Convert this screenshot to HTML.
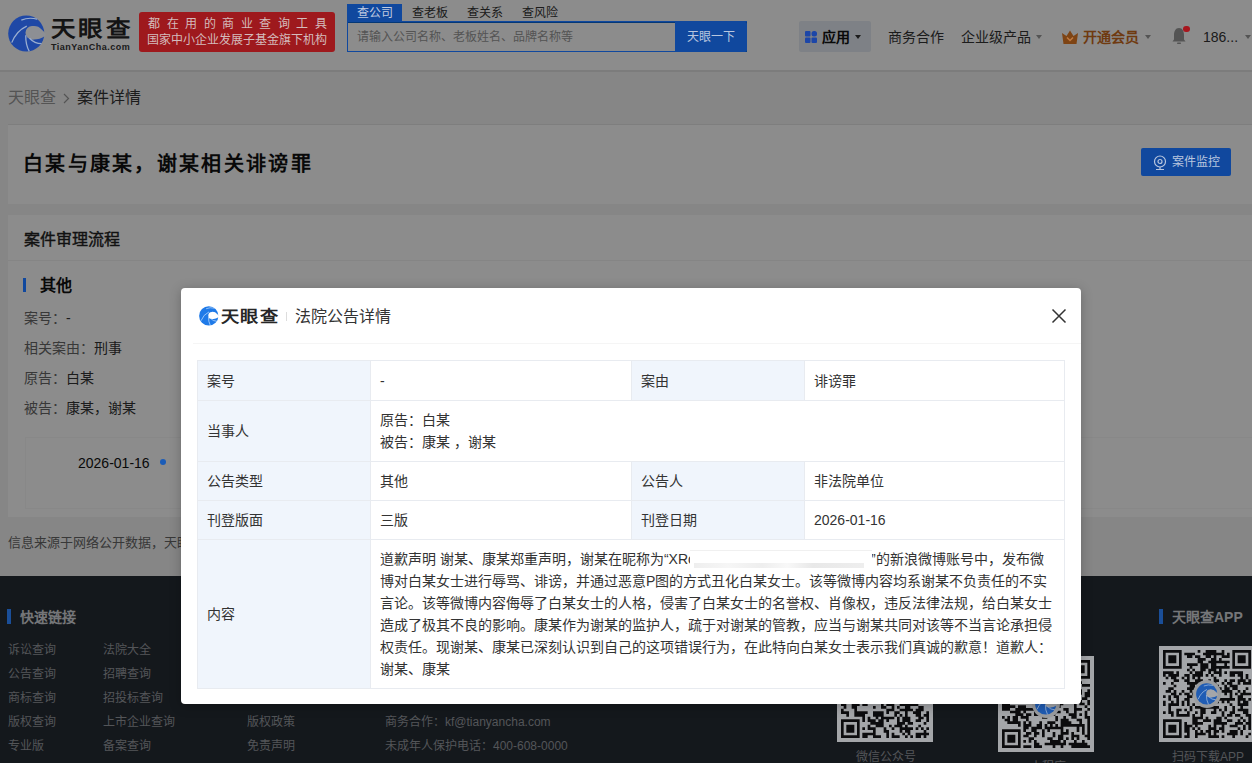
<!DOCTYPE html>
<html lang="zh-CN"><head><meta charset="utf-8">
<style>
*{margin:0;padding:0;box-sizing:border-box;}
html,body{width:1252px;height:763px;overflow:hidden;}
body{font-family:"Liberation Sans",sans-serif;background:#f5f5f5;color:#333;position:relative;font-size:14px;}
.a{position:absolute;white-space:nowrap;line-height:1;}
.z{z-index:5;}
#hdr{position:absolute;left:0;top:0;width:1252px;height:72px;background:#fff;border-bottom:2px solid #e2e2e2;}
.card{position:absolute;background:#fff;}
#footer{position:absolute;left:0;top:576px;width:1252px;height:187px;background:#262c33;}
#overlay{position:absolute;left:0;top:0;width:1252px;height:763px;background:rgba(0,0,0,0.45);z-index:4;}
#modal{position:absolute;left:181px;top:288px;width:900px;height:416px;background:#fff;border-radius:4px;z-index:10;box-shadow:0 2px 12px rgba(0,0,0,0.25);}
table.t{position:absolute;left:16px;top:72px;width:868px;border-collapse:collapse;}
table.t td{border:1px solid #e8ebf0;font-size:14px;color:#333;padding:0 9px;vertical-align:middle;line-height:22px;}
table.t td.l{background:#f0f5fc;}
.caret{position:absolute;width:0;height:0;border-left:3px solid transparent;border-right:3px solid transparent;border-top:4px solid #999;}
.fl{position:absolute;font-size:12px;color:#979ba1;white-space:nowrap;line-height:1;}
.qr{position:absolute;width:96px;height:96px;}
.bar{position:absolute;width:4px;}
</style></head>
<body>
<div id="hdr">
  
  <div class="a" style="left:51px;top:18.5px;font-size:21.5px;font-weight:bold;color:#262626;letter-spacing:2px;transform:scaleX(1.14);transform-origin:0 0;">天眼查</div>
  <div class="a" style="left:51px;top:42.5px;font-size:9px;font-weight:bold;color:#333;letter-spacing:0.5px;">TianYanCha.com</div>
  <div class="a" style="left:347px;top:22px;width:400px;height:30px;border:1.5px solid #0a66d6;background:#fff;"></div>
  <div class="a" style="left:357px;top:31px;font-size:12px;color:#999;">请输入公司名称、老板姓名、品牌名称等</div>
  <div class="a" style="left:412px;top:7px;font-size:12px;color:#333;">查老板</div>
  <div class="a" style="left:467px;top:7px;font-size:12px;color:#333;">查关系</div>
  <div class="a" style="left:522px;top:7px;font-size:12px;color:#333;">查风险</div>
  <div class="a" style="left:799px;top:21px;width:72px;height:31px;background:#e6ecf4;border-radius:2px;"></div>
  <div class="a" style="left:822px;top:30px;font-size:14px;color:#111;font-weight:bold;">应用</div>
  <div class="caret" style="left:855px;top:35px;border-top-color:#333;"></div>
  <div class="a" style="left:888px;top:30px;font-size:14px;color:#333;">商务合作</div>
  <div class="a" style="left:961px;top:30px;font-size:14px;color:#333;">企业级产品</div>
  <div class="caret" style="left:1036px;top:35px;"></div>
  <div class="caret" style="left:1145px;top:35px;"></div>
  <svg class="a" style="left:1171px;top:27px;" width="16" height="18" viewBox="0 0 16 18"><path d="M8 1 C4.5 1 3 4.5 3 8 L3 12.5 L1.5 14.5 L14.5 14.5 L13 12.5 L13 8 C13 4.5 11.5 1 8 1z" fill="#999"/><rect x="6" y="15.5" width="4" height="1.5" rx="0.7" fill="#999"/></svg>
  <div class="a" style="left:1203px;top:30px;font-size:14px;color:#333;">186...</div>
  <div class="caret" style="left:1245px;top:35px;"></div>
</div>
<!-- saturated header items above overlay -->
<div class="a z" style="left:8px;top:14.5px;"><svg width="37.5" height="37.5" viewBox="0 0 38 38">
<circle cx="18.5" cy="18.8" r="18.3" fill="#1f48a6"/>
<circle cx="24.5" cy="18" r="6.8" fill="#8d8f94"/>
<path d="M24 11.2 Q31 10.5 33.8 14.5 L38 18.5 L38 21 Q31 25.5 24.5 24.8z" fill="#8d8f94"/>
<path d="M3.8 28 Q8.5 16 19 11.2" stroke="#9aaed0" stroke-width="1.3" fill="none"/>
<path d="M13.5 5.2 Q21 2 29.5 4.2" stroke="#9aaed0" stroke-width="1.2" fill="none"/>
<path d="M18 20.5 Q17.8 30 21.5 36.8" stroke="#9aaed0" stroke-width="1.3" fill="none"/>
<path d="M21.8 23.5 Q27 29 34 29" stroke="#9aaed0" stroke-width="1.3" fill="none"/>
</svg></div>
<div class="a z" style="left:139px;top:12px;width:196px;height:40px;background:#9e191d;border-radius:3px;"></div>
<div class="a z" style="left:148px;top:18px;width:179px;font-size:12px;color:#d4bcbc;display:flex;justify-content:space-between;"><span>都</span><span>在</span><span>用</span><span>的</span><span>商</span><span>业</span><span>查</span><span>询</span><span>工</span><span>具</span></div>
<div class="a z" style="left:147px;top:34px;font-size:12px;color:#d4bcbc;">国家中小企业发展子基金旗下机构</div>
<div class="a z" style="left:347px;top:4px;width:55px;height:18px;background:#10489e;"></div>
<div class="a z" style="left:357px;top:7px;font-size:12px;color:#c0cbe0;">查公司</div>
<div class="a z" style="left:347px;top:21px;width:400px;height:1px;background:#10489e;"></div>
<div class="a z" style="left:347px;top:22px;width:1px;height:30px;background:#10489e;"></div>
<div class="a z" style="left:347px;top:51px;width:330px;height:1px;background:#10489e;"></div>
<div class="a z" style="left:675px;top:22px;width:72px;height:30px;background:#10489e;border-radius:0 2px 2px 0;"></div>
<div class="a z" style="left:687px;top:31px;font-size:12px;color:#b8c6de;">天眼一下</div>
<svg class="a z" style="left:805px;top:31px;" width="12" height="12" viewBox="0 0 12 12"><rect x="0" y="0" width="5.5" height="5.5" rx="1" fill="#1c46a8"/><rect x="6.5" y="0" width="5.5" height="5.5" rx="2.5" fill="#1c46a8"/><rect x="0" y="6.5" width="5.5" height="5.5" rx="1" fill="#1c46a8"/><rect x="6.5" y="6.5" width="5.5" height="5.5" rx="1" fill="#1c46a8"/></svg>
<svg class="a z" style="left:1062px;top:30px;" width="16" height="14" viewBox="0 0 16 14"><path d="M0 3 L4.5 6 L8 0.5 L11.5 6 L16 3 L14.5 14 L1.5 14z" fill="#7e4414"/><path d="M5 7.5 L8 10.5 L11 7.5" stroke="#c07a40" stroke-width="1.5" fill="none"/></svg>
<div class="a z" style="left:1083px;top:30px;font-size:14px;color:#6f3a10;font-weight:bold;">开通会员</div>
<div class="a z" style="left:1183px;top:25.5px;width:6.5px;height:6.5px;background:#a8161e;border-radius:50%;"></div>

<div class="a" style="left:8px;top:90px;font-size:16px;color:#999;">天眼查</div>
<svg class="a" style="left:63px;top:93px;" width="7" height="11" viewBox="0 0 7 11"><path d="M1 1 L5.5 5.5 L1 10" stroke="#999" stroke-width="1.2" fill="none"/></svg>
<div class="a" style="left:77px;top:90px;font-size:16px;color:#333;">案件详情</div>

<div class="card" style="left:8px;top:124px;width:1252px;height:80px;border-top:1px solid #e6e6e6;">
  <div class="a" style="left:15px;top:29px;font-size:20px;font-weight:bold;color:#111;letter-spacing:2.3px;">白某与康某，谢某相关诽谤罪</div>
</div>
<div class="a z" style="left:1141px;top:148px;width:90px;height:28px;background:#10489e;border-radius:2px;"></div>
<svg class="a z" style="left:1153px;top:155px;" width="14" height="16" viewBox="0 0 14 16"><circle cx="7" cy="6.5" r="5.5" stroke="#b8c6de" stroke-width="1.2" fill="none"/><circle cx="7" cy="6.5" r="2" stroke="#b8c6de" stroke-width="1.2" fill="none"/><path d="M3 14.5 L11 14.5 M7 12 L7 14.5" stroke="#b8c6de" stroke-width="1.2"/></svg>
<div class="a z" style="left:1172px;top:156px;font-size:12px;color:#b8c6de;">案件监控</div>

<div class="card" style="left:8px;top:215px;width:1252px;height:302px;">
  <div class="a" style="left:16px;top:17px;font-size:16px;color:#222;-webkit-text-stroke:0.4px #222;">案件审理流程</div>
  <div class="a" style="left:0;top:45px;width:1252px;height:1px;background:#f2f2f2;"></div>
  <div class="a" style="left:32px;top:63px;font-size:16px;font-weight:bold;color:#111;">其他</div>
  <div class="a" style="left:16px;top:96px;font-size:14px;color:#666;">案号：<span style="color:#333">-</span></div>
  <div class="a" style="left:16px;top:126px;font-size:14px;color:#666;">相关案由：<span style="color:#333">刑事</span></div>
  <div class="a" style="left:16px;top:156px;font-size:14px;color:#666;">原告：<span style="color:#333">白某</span></div>
  <div class="a" style="left:16px;top:186px;font-size:14px;color:#666;">被告：<span style="color:#333">康某，谢某</span></div>
  <div class="a" style="left:17px;top:222px;width:1252px;height:72px;border:1px solid #f8f8f8;"></div>
  <div class="a" style="left:70px;top:241px;font-size:14px;color:#111;">2026-01-16</div>
</div>
<div class="a z" style="left:23px;top:278px;width:3px;height:14px;background:#10489e;"></div>
<div class="a z" style="left:160px;top:459px;width:6px;height:6px;background:#1a5cb8;border-radius:50%;"></div>

<div class="a" style="left:8px;top:536px;font-size:13px;color:#666;">信息来源于网络公开数据，天眼查</div>

<div id="footer">
  <div class="a" style="left:20px;top:34px;font-size:14px;font-weight:bold;color:#d5d8dc;">快速链接</div>
  <div class="fl" style="left:8px;top:68px;">诉讼查询</div>
  <div class="fl" style="left:8px;top:92px;">公告查询</div>
  <div class="fl" style="left:8px;top:116px;">商标查询</div>
  <div class="fl" style="left:8px;top:140px;">版权查询</div>
  <div class="fl" style="left:8px;top:164px;">专业版</div>
  <div class="fl" style="left:103px;top:68px;">法院大全</div>
  <div class="fl" style="left:103px;top:92px;">招聘查询</div>
  <div class="fl" style="left:103px;top:116px;">招投标查询</div>
  <div class="fl" style="left:103px;top:140px;">上市企业查询</div>
  <div class="fl" style="left:103px;top:164px;">备案查询</div>
  <div class="fl" style="left:247px;top:140px;">版权政策</div>
  <div class="fl" style="left:247px;top:164px;">免责声明</div>
  <div class="fl" style="left:385px;top:140px;">商务合作：kf@tianyancha.com</div>
  <div class="fl" style="left:385px;top:164px;">未成年人保护电话：400-608-0000</div>
  <div class="a" style="left:1172px;top:34px;font-size:14px;font-weight:bold;color:#d5d8dc;">天眼查APP</div>
  <div class="fl" style="left:856px;top:175px;">微信公众号</div>
  <div class="fl" style="left:1172px;top:175px;">扫码下载APP</div>
  <div class="fl" style="left:1030px;top:185px;">小程序</div>
</div>
<div class="a z" style="left:7px;top:609px;width:4px;height:15px;background:#1a4e98;"></div>
<div class="a z" style="left:1159px;top:609px;width:4px;height:15px;background:#1a4e98;"></div>
<div class="qr z" style="left:837px;top:646px;"><svg width="96" height="96" viewBox="0 0 96 96"><rect width="96" height="96" fill="#a4a6a9"/><g transform="translate(4,4)"><path d="M0.00 0.00h18.67v2.67h-18.67zM26.67 0.00h8.00v2.67h-8.00zM40.00 0.00h2.67v2.67h-2.67zM53.33 0.00h5.33v2.67h-5.33zM61.33 0.00h5.33v2.67h-5.33zM69.33 0.00h18.67v2.67h-18.67zM0.00 2.67h2.67v2.67h-2.67zM16.00 2.67h2.67v2.67h-2.67zM21.33 2.67h8.00v2.67h-8.00zM32.00 2.67h2.67v2.67h-2.67zM37.33 2.67h2.67v2.67h-2.67zM45.33 2.67h5.33v2.67h-5.33zM53.33 2.67h2.67v2.67h-2.67zM58.67 2.67h5.33v2.67h-5.33zM69.33 2.67h2.67v2.67h-2.67zM85.33 2.67h2.67v2.67h-2.67zM0.00 5.33h2.67v2.67h-2.67zM5.33 5.33h8.00v2.67h-8.00zM16.00 5.33h2.67v2.67h-2.67zM21.33 5.33h2.67v2.67h-2.67zM26.67 5.33h10.67v2.67h-10.67zM42.67 5.33h2.67v2.67h-2.67zM48.00 5.33h5.33v2.67h-5.33zM58.67 5.33h2.67v2.67h-2.67zM64.00 5.33h2.67v2.67h-2.67zM69.33 5.33h2.67v2.67h-2.67zM74.67 5.33h8.00v2.67h-8.00zM85.33 5.33h2.67v2.67h-2.67zM0.00 8.00h2.67v2.67h-2.67zM5.33 8.00h8.00v2.67h-8.00zM16.00 8.00h2.67v2.67h-2.67zM21.33 8.00h2.67v2.67h-2.67zM29.33 8.00h5.33v2.67h-5.33zM40.00 8.00h2.67v2.67h-2.67zM50.67 8.00h8.00v2.67h-8.00zM61.33 8.00h2.67v2.67h-2.67zM69.33 8.00h2.67v2.67h-2.67zM74.67 8.00h8.00v2.67h-8.00zM85.33 8.00h2.67v2.67h-2.67zM0.00 10.67h2.67v2.67h-2.67zM5.33 10.67h8.00v2.67h-8.00zM16.00 10.67h2.67v2.67h-2.67zM21.33 10.67h10.67v2.67h-10.67zM34.67 10.67h5.33v2.67h-5.33zM53.33 10.67h8.00v2.67h-8.00zM69.33 10.67h2.67v2.67h-2.67zM74.67 10.67h8.00v2.67h-8.00zM85.33 10.67h2.67v2.67h-2.67zM0.00 13.33h2.67v2.67h-2.67zM16.00 13.33h2.67v2.67h-2.67zM29.33 13.33h2.67v2.67h-2.67zM42.67 13.33h2.67v2.67h-2.67zM50.67 13.33h2.67v2.67h-2.67zM64.00 13.33h2.67v2.67h-2.67zM69.33 13.33h2.67v2.67h-2.67zM85.33 13.33h2.67v2.67h-2.67zM0.00 16.00h18.67v2.67h-18.67zM21.33 16.00h2.67v2.67h-2.67zM26.67 16.00h5.33v2.67h-5.33zM37.33 16.00h2.67v2.67h-2.67zM42.67 16.00h2.67v2.67h-2.67zM48.00 16.00h5.33v2.67h-5.33zM61.33 16.00h2.67v2.67h-2.67zM69.33 16.00h18.67v2.67h-18.67zM26.67 18.67h8.00v2.67h-8.00zM37.33 18.67h2.67v2.67h-2.67zM45.33 18.67h2.67v2.67h-2.67zM50.67 18.67h10.67v2.67h-10.67zM64.00 18.67h2.67v2.67h-2.67zM2.67 21.33h13.33v2.67h-13.33zM18.67 21.33h8.00v2.67h-8.00zM37.33 21.33h2.67v2.67h-2.67zM45.33 21.33h2.67v2.67h-2.67zM53.33 21.33h5.33v2.67h-5.33zM64.00 21.33h2.67v2.67h-2.67zM77.33 21.33h2.67v2.67h-2.67zM82.67 21.33h2.67v2.67h-2.67zM8.00 24.00h2.67v2.67h-2.67zM24.00 24.00h2.67v2.67h-2.67zM32.00 24.00h8.00v2.67h-8.00zM45.33 24.00h5.33v2.67h-5.33zM53.33 24.00h2.67v2.67h-2.67zM58.67 24.00h5.33v2.67h-5.33zM66.67 24.00h5.33v2.67h-5.33zM85.33 24.00h2.67v2.67h-2.67zM2.67 26.67h5.33v2.67h-5.33zM10.67 26.67h2.67v2.67h-2.67zM26.67 26.67h5.33v2.67h-5.33zM37.33 26.67h2.67v2.67h-2.67zM50.67 26.67h2.67v2.67h-2.67zM61.33 26.67h2.67v2.67h-2.67zM69.33 26.67h2.67v2.67h-2.67zM77.33 26.67h2.67v2.67h-2.67zM82.67 26.67h2.67v2.67h-2.67zM0.00 29.33h2.67v2.67h-2.67zM8.00 29.33h10.67v2.67h-10.67zM24.00 29.33h8.00v2.67h-8.00zM37.33 29.33h2.67v2.67h-2.67zM42.67 29.33h8.00v2.67h-8.00zM53.33 29.33h5.33v2.67h-5.33zM61.33 29.33h2.67v2.67h-2.67zM66.67 29.33h2.67v2.67h-2.67zM72.00 29.33h5.33v2.67h-5.33zM80.00 29.33h8.00v2.67h-8.00zM2.67 32.00h5.33v2.67h-5.33zM24.00 32.00h2.67v2.67h-2.67zM34.67 32.00h5.33v2.67h-5.33zM42.67 32.00h2.67v2.67h-2.67zM50.67 32.00h5.33v2.67h-5.33zM58.67 32.00h5.33v2.67h-5.33zM66.67 32.00h2.67v2.67h-2.67zM72.00 32.00h5.33v2.67h-5.33zM80.00 32.00h5.33v2.67h-5.33zM5.33 34.67h2.67v2.67h-2.67zM18.67 34.67h10.67v2.67h-10.67zM37.33 34.67h8.00v2.67h-8.00zM53.33 34.67h5.33v2.67h-5.33zM61.33 34.67h2.67v2.67h-2.67zM66.67 34.67h5.33v2.67h-5.33zM74.67 34.67h2.67v2.67h-2.67zM80.00 34.67h2.67v2.67h-2.67zM0.00 37.33h5.33v2.67h-5.33zM8.00 37.33h8.00v2.67h-8.00zM18.67 37.33h2.67v2.67h-2.67zM34.67 37.33h2.67v2.67h-2.67zM48.00 37.33h2.67v2.67h-2.67zM61.33 37.33h2.67v2.67h-2.67zM77.33 37.33h2.67v2.67h-2.67zM82.67 37.33h5.33v2.67h-5.33zM0.00 40.00h8.00v2.67h-8.00zM13.33 40.00h2.67v2.67h-2.67zM21.33 40.00h2.67v2.67h-2.67zM32.00 40.00h2.67v2.67h-2.67zM48.00 40.00h2.67v2.67h-2.67zM56.00 40.00h18.67v2.67h-18.67zM8.00 42.67h2.67v2.67h-2.67zM16.00 42.67h2.67v2.67h-2.67zM21.33 42.67h10.67v2.67h-10.67zM34.67 42.67h2.67v2.67h-2.67zM40.00 42.67h2.67v2.67h-2.67zM48.00 42.67h5.33v2.67h-5.33zM58.67 42.67h2.67v2.67h-2.67zM64.00 42.67h13.33v2.67h-13.33zM80.00 42.67h2.67v2.67h-2.67zM0.00 45.33h2.67v2.67h-2.67zM8.00 45.33h2.67v2.67h-2.67zM13.33 45.33h5.33v2.67h-5.33zM21.33 45.33h2.67v2.67h-2.67zM32.00 45.33h2.67v2.67h-2.67zM42.67 45.33h2.67v2.67h-2.67zM48.00 45.33h8.00v2.67h-8.00zM58.67 45.33h5.33v2.67h-5.33zM66.67 45.33h5.33v2.67h-5.33zM74.67 45.33h2.67v2.67h-2.67zM2.67 48.00h5.33v2.67h-5.33zM16.00 48.00h5.33v2.67h-5.33zM34.67 48.00h5.33v2.67h-5.33zM48.00 48.00h10.67v2.67h-10.67zM61.33 48.00h2.67v2.67h-2.67zM66.67 48.00h5.33v2.67h-5.33zM80.00 48.00h8.00v2.67h-8.00zM0.00 50.67h2.67v2.67h-2.67zM8.00 50.67h5.33v2.67h-5.33zM21.33 50.67h8.00v2.67h-8.00zM32.00 50.67h2.67v2.67h-2.67zM40.00 50.67h2.67v2.67h-2.67zM50.67 50.67h8.00v2.67h-8.00zM61.33 50.67h5.33v2.67h-5.33zM69.33 50.67h2.67v2.67h-2.67zM74.67 50.67h2.67v2.67h-2.67zM80.00 50.67h5.33v2.67h-5.33zM0.00 53.33h5.33v2.67h-5.33zM10.67 53.33h8.00v2.67h-8.00zM21.33 53.33h5.33v2.67h-5.33zM40.00 53.33h2.67v2.67h-2.67zM45.33 53.33h8.00v2.67h-8.00zM58.67 53.33h18.67v2.67h-18.67zM2.67 56.00h2.67v2.67h-2.67zM10.67 56.00h5.33v2.67h-5.33zM32.00 56.00h2.67v2.67h-2.67zM40.00 56.00h5.33v2.67h-5.33zM50.67 56.00h2.67v2.67h-2.67zM56.00 56.00h2.67v2.67h-2.67zM64.00 56.00h5.33v2.67h-5.33zM77.33 56.00h5.33v2.67h-5.33zM0.00 58.67h2.67v2.67h-2.67zM13.33 58.67h2.67v2.67h-2.67zM45.33 58.67h8.00v2.67h-8.00zM58.67 58.67h13.33v2.67h-13.33zM74.67 58.67h8.00v2.67h-8.00zM0.00 61.33h8.00v2.67h-8.00zM13.33 61.33h13.33v2.67h-13.33zM32.00 61.33h10.67v2.67h-10.67zM45.33 61.33h2.67v2.67h-2.67zM53.33 61.33h5.33v2.67h-5.33zM64.00 61.33h2.67v2.67h-2.67zM72.00 61.33h8.00v2.67h-8.00zM85.33 61.33h2.67v2.67h-2.67zM5.33 64.00h2.67v2.67h-2.67zM13.33 64.00h10.67v2.67h-10.67zM32.00 64.00h10.67v2.67h-10.67zM53.33 64.00h2.67v2.67h-2.67zM58.67 64.00h2.67v2.67h-2.67zM64.00 64.00h2.67v2.67h-2.67zM74.67 64.00h5.33v2.67h-5.33zM82.67 64.00h5.33v2.67h-5.33zM21.33 66.67h2.67v2.67h-2.67zM26.67 66.67h2.67v2.67h-2.67zM34.67 66.67h2.67v2.67h-2.67zM40.00 66.67h13.33v2.67h-13.33zM56.00 66.67h2.67v2.67h-2.67zM61.33 66.67h8.00v2.67h-8.00zM77.33 66.67h5.33v2.67h-5.33zM85.33 66.67h2.67v2.67h-2.67zM0.00 69.33h18.67v2.67h-18.67zM21.33 69.33h2.67v2.67h-2.67zM26.67 69.33h8.00v2.67h-8.00zM37.33 69.33h5.33v2.67h-5.33zM45.33 69.33h2.67v2.67h-2.67zM56.00 69.33h2.67v2.67h-2.67zM61.33 69.33h8.00v2.67h-8.00zM74.67 69.33h5.33v2.67h-5.33zM85.33 69.33h2.67v2.67h-2.67zM0.00 72.00h2.67v2.67h-2.67zM16.00 72.00h2.67v2.67h-2.67zM29.33 72.00h13.33v2.67h-13.33zM56.00 72.00h8.00v2.67h-8.00zM66.67 72.00h5.33v2.67h-5.33zM82.67 72.00h2.67v2.67h-2.67zM0.00 74.67h2.67v2.67h-2.67zM5.33 74.67h8.00v2.67h-8.00zM16.00 74.67h2.67v2.67h-2.67zM26.67 74.67h2.67v2.67h-2.67zM34.67 74.67h8.00v2.67h-8.00zM48.00 74.67h2.67v2.67h-2.67zM53.33 74.67h8.00v2.67h-8.00zM64.00 74.67h2.67v2.67h-2.67zM77.33 74.67h2.67v2.67h-2.67zM0.00 77.33h2.67v2.67h-2.67zM5.33 77.33h8.00v2.67h-8.00zM16.00 77.33h2.67v2.67h-2.67zM21.33 77.33h2.67v2.67h-2.67zM26.67 77.33h8.00v2.67h-8.00zM42.67 77.33h2.67v2.67h-2.67zM50.67 77.33h2.67v2.67h-2.67zM58.67 77.33h13.33v2.67h-13.33zM74.67 77.33h2.67v2.67h-2.67zM80.00 77.33h2.67v2.67h-2.67zM85.33 77.33h2.67v2.67h-2.67zM0.00 80.00h2.67v2.67h-2.67zM5.33 80.00h8.00v2.67h-8.00zM16.00 80.00h2.67v2.67h-2.67zM32.00 80.00h2.67v2.67h-2.67zM42.67 80.00h5.33v2.67h-5.33zM58.67 80.00h2.67v2.67h-2.67zM64.00 80.00h5.33v2.67h-5.33zM82.67 80.00h2.67v2.67h-2.67zM0.00 82.67h2.67v2.67h-2.67zM16.00 82.67h2.67v2.67h-2.67zM21.33 82.67h13.33v2.67h-13.33zM45.33 82.67h2.67v2.67h-2.67zM50.67 82.67h2.67v2.67h-2.67zM61.33 82.67h2.67v2.67h-2.67zM66.67 82.67h2.67v2.67h-2.67zM74.67 82.67h13.33v2.67h-13.33zM0.00 85.33h18.67v2.67h-18.67zM21.33 85.33h5.33v2.67h-5.33zM32.00 85.33h8.00v2.67h-8.00zM45.33 85.33h2.67v2.67h-2.67zM50.67 85.33h8.00v2.67h-8.00zM64.00 85.33h2.67v2.67h-2.67zM69.33 85.33h2.67v2.67h-2.67zM74.67 85.33h5.33v2.67h-5.33zM82.67 85.33h2.67v2.67h-2.67z" fill="#0c0c0e"/></g></svg></div>
<div class="qr z" style="left:998px;top:656px;"><svg width="96" height="96" viewBox="0 0 96 96"><rect width="96" height="96" fill="#a4a6a9"/><g transform="translate(4,4)"><path d="M0.00 0.00h18.67v2.67h-18.67zM24.00 0.00h2.67v2.67h-2.67zM29.33 0.00h2.67v2.67h-2.67zM45.33 0.00h2.67v2.67h-2.67zM53.33 0.00h5.33v2.67h-5.33zM69.33 0.00h18.67v2.67h-18.67zM0.00 2.67h2.67v2.67h-2.67zM16.00 2.67h2.67v2.67h-2.67zM24.00 2.67h2.67v2.67h-2.67zM34.67 2.67h2.67v2.67h-2.67zM42.67 2.67h5.33v2.67h-5.33zM50.67 2.67h2.67v2.67h-2.67zM58.67 2.67h2.67v2.67h-2.67zM69.33 2.67h2.67v2.67h-2.67zM85.33 2.67h2.67v2.67h-2.67zM0.00 5.33h2.67v2.67h-2.67zM5.33 5.33h8.00v2.67h-8.00zM16.00 5.33h2.67v2.67h-2.67zM21.33 5.33h5.33v2.67h-5.33zM34.67 5.33h2.67v2.67h-2.67zM40.00 5.33h5.33v2.67h-5.33zM50.67 5.33h2.67v2.67h-2.67zM56.00 5.33h2.67v2.67h-2.67zM69.33 5.33h2.67v2.67h-2.67zM74.67 5.33h8.00v2.67h-8.00zM85.33 5.33h2.67v2.67h-2.67zM0.00 8.00h2.67v2.67h-2.67zM5.33 8.00h8.00v2.67h-8.00zM16.00 8.00h2.67v2.67h-2.67zM21.33 8.00h5.33v2.67h-5.33zM29.33 8.00h10.67v2.67h-10.67zM42.67 8.00h16.00v2.67h-16.00zM69.33 8.00h2.67v2.67h-2.67zM74.67 8.00h8.00v2.67h-8.00zM85.33 8.00h2.67v2.67h-2.67zM0.00 10.67h2.67v2.67h-2.67zM5.33 10.67h8.00v2.67h-8.00zM16.00 10.67h2.67v2.67h-2.67zM26.67 10.67h5.33v2.67h-5.33zM34.67 10.67h8.00v2.67h-8.00zM45.33 10.67h2.67v2.67h-2.67zM56.00 10.67h2.67v2.67h-2.67zM61.33 10.67h5.33v2.67h-5.33zM69.33 10.67h2.67v2.67h-2.67zM74.67 10.67h8.00v2.67h-8.00zM85.33 10.67h2.67v2.67h-2.67zM0.00 13.33h2.67v2.67h-2.67zM16.00 13.33h2.67v2.67h-2.67zM32.00 13.33h5.33v2.67h-5.33zM42.67 13.33h2.67v2.67h-2.67zM48.00 13.33h13.33v2.67h-13.33zM69.33 13.33h2.67v2.67h-2.67zM85.33 13.33h2.67v2.67h-2.67zM0.00 16.00h18.67v2.67h-18.67zM24.00 16.00h2.67v2.67h-2.67zM32.00 16.00h2.67v2.67h-2.67zM50.67 16.00h10.67v2.67h-10.67zM64.00 16.00h2.67v2.67h-2.67zM69.33 16.00h18.67v2.67h-18.67zM26.67 18.67h16.00v2.67h-16.00zM48.00 18.67h5.33v2.67h-5.33zM58.67 18.67h8.00v2.67h-8.00zM0.00 21.33h16.00v2.67h-16.00zM18.67 21.33h5.33v2.67h-5.33zM29.33 21.33h2.67v2.67h-2.67zM37.33 21.33h5.33v2.67h-5.33zM48.00 21.33h5.33v2.67h-5.33zM56.00 21.33h5.33v2.67h-5.33zM69.33 21.33h2.67v2.67h-2.67zM77.33 21.33h2.67v2.67h-2.67zM2.67 24.00h2.67v2.67h-2.67zM8.00 24.00h2.67v2.67h-2.67zM13.33 24.00h2.67v2.67h-2.67zM21.33 24.00h8.00v2.67h-8.00zM32.00 24.00h2.67v2.67h-2.67zM37.33 24.00h2.67v2.67h-2.67zM42.67 24.00h2.67v2.67h-2.67zM50.67 24.00h8.00v2.67h-8.00zM61.33 24.00h8.00v2.67h-8.00zM72.00 24.00h2.67v2.67h-2.67zM80.00 24.00h8.00v2.67h-8.00zM0.00 26.67h8.00v2.67h-8.00zM10.67 26.67h8.00v2.67h-8.00zM24.00 26.67h5.33v2.67h-5.33zM32.00 26.67h8.00v2.67h-8.00zM50.67 26.67h5.33v2.67h-5.33zM58.67 26.67h2.67v2.67h-2.67zM64.00 26.67h8.00v2.67h-8.00zM74.67 26.67h2.67v2.67h-2.67zM5.33 29.33h2.67v2.67h-2.67zM13.33 29.33h8.00v2.67h-8.00zM26.67 29.33h5.33v2.67h-5.33zM37.33 29.33h5.33v2.67h-5.33zM45.33 29.33h2.67v2.67h-2.67zM50.67 29.33h2.67v2.67h-2.67zM56.00 29.33h13.33v2.67h-13.33zM77.33 29.33h2.67v2.67h-2.67zM85.33 29.33h2.67v2.67h-2.67zM0.00 32.00h16.00v2.67h-16.00zM18.67 32.00h2.67v2.67h-2.67zM26.67 32.00h2.67v2.67h-2.67zM40.00 32.00h10.67v2.67h-10.67zM56.00 32.00h18.67v2.67h-18.67zM77.33 32.00h2.67v2.67h-2.67zM82.67 32.00h5.33v2.67h-5.33zM2.67 34.67h13.33v2.67h-13.33zM18.67 34.67h2.67v2.67h-2.67zM24.00 34.67h10.67v2.67h-10.67zM37.33 34.67h10.67v2.67h-10.67zM53.33 34.67h8.00v2.67h-8.00zM64.00 34.67h5.33v2.67h-5.33zM72.00 34.67h2.67v2.67h-2.67zM82.67 34.67h5.33v2.67h-5.33zM2.67 37.33h2.67v2.67h-2.67zM8.00 37.33h13.33v2.67h-13.33zM24.00 37.33h2.67v2.67h-2.67zM32.00 37.33h5.33v2.67h-5.33zM50.67 37.33h5.33v2.67h-5.33zM58.67 37.33h8.00v2.67h-8.00zM69.33 37.33h8.00v2.67h-8.00zM80.00 37.33h5.33v2.67h-5.33zM0.00 40.00h5.33v2.67h-5.33zM13.33 40.00h13.33v2.67h-13.33zM32.00 40.00h5.33v2.67h-5.33zM45.33 40.00h2.67v2.67h-2.67zM56.00 40.00h2.67v2.67h-2.67zM64.00 40.00h10.67v2.67h-10.67zM77.33 40.00h2.67v2.67h-2.67zM85.33 40.00h2.67v2.67h-2.67zM0.00 42.67h8.00v2.67h-8.00zM32.00 42.67h5.33v2.67h-5.33zM40.00 42.67h2.67v2.67h-2.67zM56.00 42.67h5.33v2.67h-5.33zM72.00 42.67h2.67v2.67h-2.67zM77.33 42.67h5.33v2.67h-5.33zM85.33 42.67h2.67v2.67h-2.67zM0.00 45.33h13.33v2.67h-13.33zM16.00 45.33h8.00v2.67h-8.00zM34.67 45.33h2.67v2.67h-2.67zM40.00 45.33h5.33v2.67h-5.33zM50.67 45.33h2.67v2.67h-2.67zM56.00 45.33h2.67v2.67h-2.67zM72.00 45.33h2.67v2.67h-2.67zM82.67 45.33h2.67v2.67h-2.67zM0.00 48.00h8.00v2.67h-8.00zM13.33 48.00h21.33v2.67h-21.33zM48.00 48.00h5.33v2.67h-5.33zM61.33 48.00h5.33v2.67h-5.33zM72.00 48.00h8.00v2.67h-8.00zM85.33 48.00h2.67v2.67h-2.67zM8.00 50.67h10.67v2.67h-10.67zM21.33 50.67h2.67v2.67h-2.67zM32.00 50.67h2.67v2.67h-2.67zM40.00 50.67h5.33v2.67h-5.33zM50.67 50.67h8.00v2.67h-8.00zM64.00 50.67h2.67v2.67h-2.67zM72.00 50.67h2.67v2.67h-2.67zM82.67 50.67h2.67v2.67h-2.67zM13.33 53.33h8.00v2.67h-8.00zM24.00 53.33h5.33v2.67h-5.33zM32.00 53.33h5.33v2.67h-5.33zM40.00 53.33h5.33v2.67h-5.33zM48.00 53.33h5.33v2.67h-5.33zM66.67 53.33h8.00v2.67h-8.00zM77.33 53.33h2.67v2.67h-2.67zM82.67 53.33h2.67v2.67h-2.67zM0.00 56.00h2.67v2.67h-2.67zM5.33 56.00h2.67v2.67h-2.67zM10.67 56.00h5.33v2.67h-5.33zM18.67 56.00h8.00v2.67h-8.00zM40.00 56.00h5.33v2.67h-5.33zM53.33 56.00h2.67v2.67h-2.67zM61.33 56.00h2.67v2.67h-2.67zM69.33 56.00h5.33v2.67h-5.33zM82.67 56.00h5.33v2.67h-5.33zM2.67 58.67h5.33v2.67h-5.33zM10.67 58.67h5.33v2.67h-5.33zM24.00 58.67h2.67v2.67h-2.67zM53.33 58.67h2.67v2.67h-2.67zM58.67 58.67h8.00v2.67h-8.00zM74.67 58.67h5.33v2.67h-5.33zM85.33 58.67h2.67v2.67h-2.67zM5.33 61.33h13.33v2.67h-13.33zM21.33 61.33h2.67v2.67h-2.67zM26.67 61.33h2.67v2.67h-2.67zM37.33 61.33h2.67v2.67h-2.67zM45.33 61.33h8.00v2.67h-8.00zM58.67 61.33h10.67v2.67h-10.67zM77.33 61.33h2.67v2.67h-2.67zM85.33 61.33h2.67v2.67h-2.67zM16.00 64.00h2.67v2.67h-2.67zM21.33 64.00h8.00v2.67h-8.00zM34.67 64.00h5.33v2.67h-5.33zM42.67 64.00h2.67v2.67h-2.67zM48.00 64.00h2.67v2.67h-2.67zM53.33 64.00h2.67v2.67h-2.67zM58.67 64.00h24.00v2.67h-24.00zM85.33 64.00h2.67v2.67h-2.67zM21.33 66.67h5.33v2.67h-5.33zM29.33 66.67h10.67v2.67h-10.67zM42.67 66.67h18.67v2.67h-18.67zM74.67 66.67h2.67v2.67h-2.67zM80.00 66.67h2.67v2.67h-2.67zM85.33 66.67h2.67v2.67h-2.67zM0.00 69.33h18.67v2.67h-18.67zM21.33 69.33h2.67v2.67h-2.67zM29.33 69.33h5.33v2.67h-5.33zM40.00 69.33h2.67v2.67h-2.67zM45.33 69.33h2.67v2.67h-2.67zM58.67 69.33h2.67v2.67h-2.67zM64.00 69.33h2.67v2.67h-2.67zM74.67 69.33h2.67v2.67h-2.67zM80.00 69.33h2.67v2.67h-2.67zM85.33 69.33h2.67v2.67h-2.67zM0.00 72.00h2.67v2.67h-2.67zM16.00 72.00h2.67v2.67h-2.67zM24.00 72.00h5.33v2.67h-5.33zM32.00 72.00h5.33v2.67h-5.33zM40.00 72.00h2.67v2.67h-2.67zM50.67 72.00h2.67v2.67h-2.67zM58.67 72.00h8.00v2.67h-8.00zM69.33 72.00h2.67v2.67h-2.67zM80.00 72.00h2.67v2.67h-2.67zM85.33 72.00h2.67v2.67h-2.67zM0.00 74.67h2.67v2.67h-2.67zM5.33 74.67h8.00v2.67h-8.00zM16.00 74.67h2.67v2.67h-2.67zM21.33 74.67h5.33v2.67h-5.33zM32.00 74.67h2.67v2.67h-2.67zM40.00 74.67h2.67v2.67h-2.67zM50.67 74.67h2.67v2.67h-2.67zM56.00 74.67h5.33v2.67h-5.33zM69.33 74.67h8.00v2.67h-8.00zM82.67 74.67h5.33v2.67h-5.33zM0.00 77.33h2.67v2.67h-2.67zM5.33 77.33h8.00v2.67h-8.00zM16.00 77.33h2.67v2.67h-2.67zM26.67 77.33h5.33v2.67h-5.33zM45.33 77.33h5.33v2.67h-5.33zM56.00 77.33h5.33v2.67h-5.33zM64.00 77.33h2.67v2.67h-2.67zM69.33 77.33h2.67v2.67h-2.67zM74.67 77.33h2.67v2.67h-2.67zM85.33 77.33h2.67v2.67h-2.67zM0.00 80.00h2.67v2.67h-2.67zM5.33 80.00h8.00v2.67h-8.00zM16.00 80.00h2.67v2.67h-2.67zM21.33 80.00h2.67v2.67h-2.67zM26.67 80.00h2.67v2.67h-2.67zM32.00 80.00h2.67v2.67h-2.67zM48.00 80.00h10.67v2.67h-10.67zM61.33 80.00h2.67v2.67h-2.67zM72.00 80.00h2.67v2.67h-2.67zM80.00 80.00h2.67v2.67h-2.67zM0.00 82.67h2.67v2.67h-2.67zM16.00 82.67h2.67v2.67h-2.67zM32.00 82.67h5.33v2.67h-5.33zM42.67 82.67h21.33v2.67h-21.33zM66.67 82.67h18.67v2.67h-18.67zM0.00 85.33h18.67v2.67h-18.67zM21.33 85.33h8.00v2.67h-8.00zM32.00 85.33h8.00v2.67h-8.00zM50.67 85.33h2.67v2.67h-2.67zM58.67 85.33h2.67v2.67h-2.67zM69.33 85.33h18.67v2.67h-18.67z" fill="#0c0c0e"/></g><circle cx="48" cy="48" r="14" fill="#9a9c9f"/><g transform="translate(37,37)"><svg width="22" height="22" viewBox="0 0 38 38">
<circle cx="18.5" cy="18.8" r="18.3" fill="#1f5cb4"/>
<circle cx="24.5" cy="18" r="6.8" fill="#a4a6a9"/>
<path d="M24 11.2 Q31 10.5 33.8 14.5 L38 18.5 L38 21 Q31 25.5 24.5 24.8z" fill="#a4a6a9"/>
<path d="M3.8 28 Q8.5 16 19 11.2" stroke="#a8c0e0" stroke-width="1.3" fill="none"/>
<path d="M13.5 5.2 Q21 2 29.5 4.2" stroke="#a8c0e0" stroke-width="1.2" fill="none"/>
<path d="M18 20.5 Q17.8 30 21.5 36.8" stroke="#a8c0e0" stroke-width="1.3" fill="none"/>
<path d="M21.8 23.5 Q27 29 34 29" stroke="#a8c0e0" stroke-width="1.3" fill="none"/>
</svg></g></svg></div>
<div class="qr z" style="left:1159px;top:646px;"><svg width="96" height="96" viewBox="0 0 96 96"><rect width="96" height="96" fill="#a4a6a9"/><g transform="translate(4,4)"><path d="M0.00 0.00h18.67v2.67h-18.67zM34.67 0.00h2.67v2.67h-2.67zM42.67 0.00h10.67v2.67h-10.67zM58.67 0.00h2.67v2.67h-2.67zM69.33 0.00h18.67v2.67h-18.67zM0.00 2.67h2.67v2.67h-2.67zM16.00 2.67h2.67v2.67h-2.67zM21.33 2.67h10.67v2.67h-10.67zM40.00 2.67h21.33v2.67h-21.33zM64.00 2.67h2.67v2.67h-2.67zM69.33 2.67h2.67v2.67h-2.67zM85.33 2.67h2.67v2.67h-2.67zM0.00 5.33h2.67v2.67h-2.67zM5.33 5.33h8.00v2.67h-8.00zM16.00 5.33h2.67v2.67h-2.67zM24.00 5.33h5.33v2.67h-5.33zM32.00 5.33h5.33v2.67h-5.33zM42.67 5.33h5.33v2.67h-5.33zM50.67 5.33h2.67v2.67h-2.67zM58.67 5.33h8.00v2.67h-8.00zM69.33 5.33h2.67v2.67h-2.67zM74.67 5.33h8.00v2.67h-8.00zM85.33 5.33h2.67v2.67h-2.67zM0.00 8.00h2.67v2.67h-2.67zM5.33 8.00h8.00v2.67h-8.00zM16.00 8.00h2.67v2.67h-2.67zM34.67 8.00h8.00v2.67h-8.00zM48.00 8.00h5.33v2.67h-5.33zM56.00 8.00h2.67v2.67h-2.67zM69.33 8.00h2.67v2.67h-2.67zM74.67 8.00h8.00v2.67h-8.00zM85.33 8.00h2.67v2.67h-2.67zM0.00 10.67h2.67v2.67h-2.67zM5.33 10.67h8.00v2.67h-8.00zM16.00 10.67h2.67v2.67h-2.67zM34.67 10.67h5.33v2.67h-5.33zM45.33 10.67h21.33v2.67h-21.33zM69.33 10.67h2.67v2.67h-2.67zM74.67 10.67h8.00v2.67h-8.00zM85.33 10.67h2.67v2.67h-2.67zM0.00 13.33h2.67v2.67h-2.67zM16.00 13.33h2.67v2.67h-2.67zM24.00 13.33h10.67v2.67h-10.67zM37.33 13.33h8.00v2.67h-8.00zM48.00 13.33h5.33v2.67h-5.33zM61.33 13.33h2.67v2.67h-2.67zM69.33 13.33h2.67v2.67h-2.67zM85.33 13.33h2.67v2.67h-2.67zM0.00 16.00h18.67v2.67h-18.67zM26.67 16.00h2.67v2.67h-2.67zM37.33 16.00h8.00v2.67h-8.00zM48.00 16.00h18.67v2.67h-18.67zM69.33 16.00h18.67v2.67h-18.67zM24.00 18.67h2.67v2.67h-2.67zM29.33 18.67h2.67v2.67h-2.67zM37.33 18.67h5.33v2.67h-5.33zM45.33 18.67h8.00v2.67h-8.00zM56.00 18.67h2.67v2.67h-2.67zM0.00 21.33h10.67v2.67h-10.67zM13.33 21.33h2.67v2.67h-2.67zM26.67 21.33h2.67v2.67h-2.67zM32.00 21.33h8.00v2.67h-8.00zM45.33 21.33h2.67v2.67h-2.67zM50.67 21.33h8.00v2.67h-8.00zM61.33 21.33h2.67v2.67h-2.67zM66.67 21.33h13.33v2.67h-13.33zM0.00 24.00h2.67v2.67h-2.67zM5.33 24.00h10.67v2.67h-10.67zM21.33 24.00h5.33v2.67h-5.33zM29.33 24.00h10.67v2.67h-10.67zM42.67 24.00h2.67v2.67h-2.67zM48.00 24.00h2.67v2.67h-2.67zM56.00 24.00h2.67v2.67h-2.67zM66.67 24.00h5.33v2.67h-5.33zM74.67 24.00h5.33v2.67h-5.33zM82.67 24.00h2.67v2.67h-2.67zM2.67 26.67h2.67v2.67h-2.67zM8.00 26.67h5.33v2.67h-5.33zM18.67 26.67h2.67v2.67h-2.67zM24.00 26.67h2.67v2.67h-2.67zM29.33 26.67h2.67v2.67h-2.67zM34.67 26.67h2.67v2.67h-2.67zM50.67 26.67h2.67v2.67h-2.67zM77.33 26.67h2.67v2.67h-2.67zM82.67 26.67h2.67v2.67h-2.67zM10.67 29.33h5.33v2.67h-5.33zM21.33 29.33h5.33v2.67h-5.33zM32.00 29.33h8.00v2.67h-8.00zM45.33 29.33h2.67v2.67h-2.67zM50.67 29.33h5.33v2.67h-5.33zM61.33 29.33h2.67v2.67h-2.67zM66.67 29.33h5.33v2.67h-5.33zM74.67 29.33h8.00v2.67h-8.00zM85.33 29.33h2.67v2.67h-2.67zM0.00 32.00h2.67v2.67h-2.67zM8.00 32.00h2.67v2.67h-2.67zM24.00 32.00h13.33v2.67h-13.33zM40.00 32.00h13.33v2.67h-13.33zM58.67 32.00h2.67v2.67h-2.67zM64.00 32.00h5.33v2.67h-5.33zM74.67 32.00h2.67v2.67h-2.67zM80.00 32.00h8.00v2.67h-8.00zM10.67 34.67h2.67v2.67h-2.67zM26.67 34.67h5.33v2.67h-5.33zM34.67 34.67h13.33v2.67h-13.33zM50.67 34.67h5.33v2.67h-5.33zM61.33 34.67h2.67v2.67h-2.67zM66.67 34.67h8.00v2.67h-8.00zM5.33 37.33h5.33v2.67h-5.33zM24.00 37.33h8.00v2.67h-8.00zM37.33 37.33h8.00v2.67h-8.00zM53.33 37.33h5.33v2.67h-5.33zM61.33 37.33h5.33v2.67h-5.33zM69.33 37.33h5.33v2.67h-5.33zM82.67 37.33h2.67v2.67h-2.67zM2.67 40.00h5.33v2.67h-5.33zM10.67 40.00h2.67v2.67h-2.67zM18.67 40.00h2.67v2.67h-2.67zM26.67 40.00h2.67v2.67h-2.67zM34.67 40.00h5.33v2.67h-5.33zM48.00 40.00h5.33v2.67h-5.33zM58.67 40.00h10.67v2.67h-10.67zM74.67 40.00h2.67v2.67h-2.67zM80.00 40.00h2.67v2.67h-2.67zM8.00 42.67h5.33v2.67h-5.33zM16.00 42.67h2.67v2.67h-2.67zM21.33 42.67h5.33v2.67h-5.33zM29.33 42.67h8.00v2.67h-8.00zM40.00 42.67h5.33v2.67h-5.33zM53.33 42.67h2.67v2.67h-2.67zM61.33 42.67h2.67v2.67h-2.67zM66.67 42.67h2.67v2.67h-2.67zM72.00 42.67h2.67v2.67h-2.67zM77.33 42.67h10.67v2.67h-10.67zM0.00 45.33h2.67v2.67h-2.67zM5.33 45.33h2.67v2.67h-2.67zM10.67 45.33h5.33v2.67h-5.33zM24.00 45.33h5.33v2.67h-5.33zM32.00 45.33h13.33v2.67h-13.33zM50.67 45.33h2.67v2.67h-2.67zM66.67 45.33h2.67v2.67h-2.67zM74.67 45.33h5.33v2.67h-5.33zM5.33 48.00h2.67v2.67h-2.67zM13.33 48.00h2.67v2.67h-2.67zM21.33 48.00h5.33v2.67h-5.33zM32.00 48.00h2.67v2.67h-2.67zM40.00 48.00h2.67v2.67h-2.67zM45.33 48.00h2.67v2.67h-2.67zM53.33 48.00h18.67v2.67h-18.67zM74.67 48.00h8.00v2.67h-8.00zM85.33 48.00h2.67v2.67h-2.67zM0.00 50.67h2.67v2.67h-2.67zM8.00 50.67h2.67v2.67h-2.67zM13.33 50.67h2.67v2.67h-2.67zM18.67 50.67h2.67v2.67h-2.67zM24.00 50.67h2.67v2.67h-2.67zM34.67 50.67h5.33v2.67h-5.33zM48.00 50.67h8.00v2.67h-8.00zM58.67 50.67h2.67v2.67h-2.67zM64.00 50.67h2.67v2.67h-2.67zM74.67 50.67h2.67v2.67h-2.67zM80.00 50.67h5.33v2.67h-5.33zM0.00 53.33h2.67v2.67h-2.67zM5.33 53.33h10.67v2.67h-10.67zM18.67 53.33h2.67v2.67h-2.67zM24.00 53.33h2.67v2.67h-2.67zM29.33 53.33h2.67v2.67h-2.67zM42.67 53.33h2.67v2.67h-2.67zM48.00 53.33h2.67v2.67h-2.67zM66.67 53.33h2.67v2.67h-2.67zM74.67 53.33h10.67v2.67h-10.67zM5.33 56.00h2.67v2.67h-2.67zM26.67 56.00h2.67v2.67h-2.67zM32.00 56.00h24.00v2.67h-24.00zM61.33 56.00h2.67v2.67h-2.67zM69.33 56.00h2.67v2.67h-2.67zM77.33 56.00h2.67v2.67h-2.67zM5.33 58.67h2.67v2.67h-2.67zM13.33 58.67h5.33v2.67h-5.33zM21.33 58.67h2.67v2.67h-2.67zM26.67 58.67h2.67v2.67h-2.67zM37.33 58.67h5.33v2.67h-5.33zM50.67 58.67h2.67v2.67h-2.67zM56.00 58.67h2.67v2.67h-2.67zM61.33 58.67h2.67v2.67h-2.67zM69.33 58.67h2.67v2.67h-2.67zM74.67 58.67h10.67v2.67h-10.67zM0.00 61.33h2.67v2.67h-2.67zM5.33 61.33h5.33v2.67h-5.33zM13.33 61.33h2.67v2.67h-2.67zM24.00 61.33h2.67v2.67h-2.67zM32.00 61.33h2.67v2.67h-2.67zM37.33 61.33h5.33v2.67h-5.33zM48.00 61.33h5.33v2.67h-5.33zM58.67 61.33h2.67v2.67h-2.67zM66.67 61.33h5.33v2.67h-5.33zM80.00 61.33h5.33v2.67h-5.33zM8.00 64.00h2.67v2.67h-2.67zM13.33 64.00h13.33v2.67h-13.33zM29.33 64.00h2.67v2.67h-2.67zM37.33 64.00h2.67v2.67h-2.67zM58.67 64.00h2.67v2.67h-2.67zM64.00 64.00h5.33v2.67h-5.33zM72.00 64.00h5.33v2.67h-5.33zM82.67 64.00h5.33v2.67h-5.33zM29.33 66.67h10.67v2.67h-10.67zM42.67 66.67h2.67v2.67h-2.67zM53.33 66.67h5.33v2.67h-5.33zM61.33 66.67h2.67v2.67h-2.67zM77.33 66.67h2.67v2.67h-2.67zM85.33 66.67h2.67v2.67h-2.67zM0.00 69.33h18.67v2.67h-18.67zM29.33 69.33h5.33v2.67h-5.33zM40.00 69.33h8.00v2.67h-8.00zM50.67 69.33h8.00v2.67h-8.00zM64.00 69.33h5.33v2.67h-5.33zM74.67 69.33h2.67v2.67h-2.67zM80.00 69.33h2.67v2.67h-2.67zM85.33 69.33h2.67v2.67h-2.67zM0.00 72.00h2.67v2.67h-2.67zM16.00 72.00h2.67v2.67h-2.67zM21.33 72.00h2.67v2.67h-2.67zM29.33 72.00h10.67v2.67h-10.67zM50.67 72.00h13.33v2.67h-13.33zM72.00 72.00h8.00v2.67h-8.00zM82.67 72.00h5.33v2.67h-5.33zM0.00 74.67h2.67v2.67h-2.67zM5.33 74.67h8.00v2.67h-8.00zM16.00 74.67h2.67v2.67h-2.67zM21.33 74.67h8.00v2.67h-8.00zM32.00 74.67h2.67v2.67h-2.67zM45.33 74.67h2.67v2.67h-2.67zM50.67 74.67h2.67v2.67h-2.67zM58.67 74.67h2.67v2.67h-2.67zM66.67 74.67h8.00v2.67h-8.00zM80.00 74.67h2.67v2.67h-2.67zM85.33 74.67h2.67v2.67h-2.67zM0.00 77.33h2.67v2.67h-2.67zM5.33 77.33h8.00v2.67h-8.00zM16.00 77.33h2.67v2.67h-2.67zM21.33 77.33h5.33v2.67h-5.33zM29.33 77.33h2.67v2.67h-2.67zM34.67 77.33h2.67v2.67h-2.67zM45.33 77.33h8.00v2.67h-8.00zM56.00 77.33h5.33v2.67h-5.33zM74.67 77.33h2.67v2.67h-2.67zM80.00 77.33h2.67v2.67h-2.67zM85.33 77.33h2.67v2.67h-2.67zM0.00 80.00h2.67v2.67h-2.67zM5.33 80.00h8.00v2.67h-8.00zM16.00 80.00h2.67v2.67h-2.67zM21.33 80.00h5.33v2.67h-5.33zM32.00 80.00h2.67v2.67h-2.67zM37.33 80.00h2.67v2.67h-2.67zM42.67 80.00h5.33v2.67h-5.33zM50.67 80.00h5.33v2.67h-5.33zM58.67 80.00h2.67v2.67h-2.67zM66.67 80.00h8.00v2.67h-8.00zM77.33 80.00h2.67v2.67h-2.67zM0.00 82.67h2.67v2.67h-2.67zM16.00 82.67h2.67v2.67h-2.67zM24.00 82.67h2.67v2.67h-2.67zM32.00 82.67h10.67v2.67h-10.67zM45.33 82.67h2.67v2.67h-2.67zM50.67 82.67h2.67v2.67h-2.67zM64.00 82.67h10.67v2.67h-10.67zM77.33 82.67h2.67v2.67h-2.67zM85.33 82.67h2.67v2.67h-2.67zM0.00 85.33h18.67v2.67h-18.67zM21.33 85.33h5.33v2.67h-5.33zM32.00 85.33h2.67v2.67h-2.67zM45.33 85.33h10.67v2.67h-10.67zM58.67 85.33h2.67v2.67h-2.67zM69.33 85.33h2.67v2.67h-2.67zM82.67 85.33h2.67v2.67h-2.67z" fill="#0c0c0e"/></g><circle cx="48" cy="48" r="14" fill="#9a9c9f"/><g transform="translate(37,37)"><svg width="22" height="22" viewBox="0 0 38 38">
<circle cx="18.5" cy="18.8" r="18.3" fill="#1f5cb4"/>
<circle cx="24.5" cy="18" r="6.8" fill="#a4a6a9"/>
<path d="M24 11.2 Q31 10.5 33.8 14.5 L38 18.5 L38 21 Q31 25.5 24.5 24.8z" fill="#a4a6a9"/>
<path d="M3.8 28 Q8.5 16 19 11.2" stroke="#a8c0e0" stroke-width="1.3" fill="none"/>
<path d="M13.5 5.2 Q21 2 29.5 4.2" stroke="#a8c0e0" stroke-width="1.2" fill="none"/>
<path d="M18 20.5 Q17.8 30 21.5 36.8" stroke="#a8c0e0" stroke-width="1.3" fill="none"/>
<path d="M21.8 23.5 Q27 29 34 29" stroke="#a8c0e0" stroke-width="1.3" fill="none"/>
</svg></g></svg></div>

<div id="overlay"></div>
<div id="modal">
  <div class="a" style="left:17.5px;top:17.5px;"><svg width="20" height="20" viewBox="0 0 38 38">
<circle cx="18.5" cy="18.8" r="18.3" fill="#1f7ae8"/>
<circle cx="24.5" cy="18" r="6.8" fill="#fff"/>
<path d="M24 11.2 Q31 10.5 33.8 14.5 L38 18.5 L38 21 Q31 25.5 24.5 24.8z" fill="#fff"/>
<path d="M3.8 28 Q8.5 16 19 11.2" stroke="#cfe6ff" stroke-width="1.3" fill="none"/>
<path d="M13.5 5.2 Q21 2 29.5 4.2" stroke="#cfe6ff" stroke-width="1.2" fill="none"/>
<path d="M18 20.5 Q17.8 30 21.5 36.8" stroke="#cfe6ff" stroke-width="1.3" fill="none"/>
<path d="M21.8 23.5 Q27 29 34 29" stroke="#cfe6ff" stroke-width="1.3" fill="none"/>
</svg></div>
  <div class="a" style="left:40px;top:21px;font-size:15.5px;font-weight:bold;color:#262626;letter-spacing:0.5px;transform:scaleX(1.17);transform-origin:0 0;">天眼查</div>
  <div class="a" style="left:105px;top:24px;width:1px;height:9px;background:#ddd;"></div>
  <div class="a" style="left:114px;top:21px;font-size:16px;color:#333;">法院公告详情</div>
  <svg class="a" style="left:870px;top:20px;" width="16" height="16" viewBox="0 0 16 16"><path d="M1.5 1.5 L14.5 14.5 M14.5 1.5 L1.5 14.5" stroke="#333" stroke-width="1.5"/></svg>
  <div class="a" style="left:12px;top:55px;width:888px;height:1px;background:#f5f5f5;"></div>
<table class="t">
<tr style="height:40px"><td class="l" style="width:173px">案号</td><td style="width:261px">-</td><td class="l" style="width:173px">案由</td><td>诽谤罪</td></tr>
<tr style="height:61px"><td class="l">当事人</td><td colspan="3">原告：白某<br>被告：康某 ，谢某</td></tr>
<tr style="height:39px"><td class="l">公告类型</td><td>其他</td><td class="l">公告人</td><td>非法院单位</td></tr>
<tr style="height:39px"><td class="l">刊登版面</td><td>三版</td><td class="l">刊登日期</td><td>2026-01-16</td></tr>
<tr style="height:149px"><td class="l">内容</td><td colspan="3">道歉声明 谢某、康某郑重声明，谢某在昵称为“XRc<span style="display:inline-block;position:relative;width:182px;height:19px;margin-left:-5px;margin-right:-1px;background:#fff;vertical-align:-5px;border-top:1px solid #f0f0f0;"><span style="position:absolute;left:4px;top:12px;width:170px;height:5px;background:linear-gradient(90deg,#eee 0,#f6f6f6 20%,#eee 40%,#f8f8f8 55%,#e8e8e8 70%,#eee 100%);"></span></span>”的新浪微博账号中，发布微博对白某女士进行辱骂、诽谤，并通过恶意P图的方式丑化白某女士。该等微博内容均系谢某不负责任的不实言论。该等微博内容侮辱了白某女士的人格，侵害了白某女士的名誉权、肖像权，违反法律法规，给白某女士造成了极其不良的影响。康某作为谢某的监护人，疏于对谢某的管教，应当与谢某共同对该等不当言论承担侵权责任。现谢某、康某已深刻认识到自己的这项错误行为，在此特向白某女士表示我们真诚的歉意！道歉人：谢某、康某</td></tr>
</table>
</div>
</body></html>
